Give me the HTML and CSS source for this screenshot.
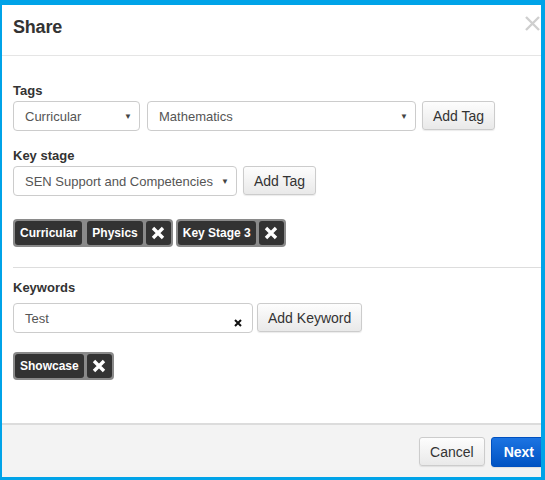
FILE: index.html
```html
<!DOCTYPE html>
<html lang="en">
  <head>
    <meta charset="UTF-8" />
    <meta name="viewport" content="width=device-width, initial-scale=1.0" />
    <title>Share</title>
    <link rel="stylesheet" href="styles.css">
  </head>

  <body>
    <div class="frame">
      <div class="modal">
        <div class="modal-header">
          <h1>Share</h1>
          <button class="close" title="Close">
            <svg width="15" height="15" viewBox="0 0 15 15">
              <path d="M1 1 L14 14 M14 1 L1 14" stroke="#cfcfcf" stroke-width="2.4" fill="none" />
            </svg>
          </button>
        </div>

        <div class="modal-body">
          <label class="field-label">Tags</label>
          <div class="row">
            <div class="select select-type">
              <span>Curricular</span>
              <span class="caret">&#9660;</span>
            </div>
            <div class="select select-subject">
              <span>Mathematics</span>
              <span class="caret">&#9660;</span>
            </div>
            <button class="btn">Add Tag</button>
          </div>

          <label class="field-label spaced">Key stage</label>
          <div class="row">
            <div class="select select-stage">
              <span>SEN Support and Competencies</span>
              <span class="caret">&#9660;</span>
            </div>
            <button class="btn">Add Tag</button>
          </div>

          <div class="chips">
            <div class="chip-group">
              <span class="chip first">Curricular</span>
              <span class="chip">Physics</span>
              <span class="chip remove">
                <svg width="14" height="14" viewBox="0 0 14 14">
                  <path d="M2 2 L12 12 M12 2 L2 12" stroke="#fff" stroke-width="3.4" fill="none" />
                </svg>
              </span>
            </div>
            <div class="chip-group">
              <span class="chip">Key Stage 3</span>
              <span class="chip remove">
                <svg width="14" height="14" viewBox="0 0 14 14">
                  <path d="M2 2 L12 12 M12 2 L2 12" stroke="#fff" stroke-width="3.4" fill="none" />
                </svg>
              </span>
            </div>
          </div>

          <hr class="divider" />

          <label class="field-label keywords">Keywords</label>
          <div class="row">
            <div class="input">
              <span>Test</span>
              <svg class="clear" width="8" height="8" viewBox="0 0 8 8">
                <path d="M1 1 L7 7 M7 1 L1 7" stroke="#111" stroke-width="2" fill="none" />
              </svg>
            </div>
            <button class="btn">Add Keyword</button>
          </div>

          <div class="chips chips-keywords">
            <div class="chip-group">
              <span class="chip">Showcase</span>
              <span class="chip remove">
                <svg width="14" height="14" viewBox="0 0 14 14">
                  <path d="M2 2 L12 12 M12 2 L2 12" stroke="#fff" stroke-width="3.4" fill="none" />
                </svg>
              </span>
            </div>
          </div>
        </div>

        <div class="modal-footer">
          <button class="btn">Cancel</button>
          <button class="btn btn-primary">Next</button>
        </div>
      </div>
    </div>
  </body>
</html>
```

FILE: styles.css
```css
body {
  margin: 0;
  font-family: "Liberation Sans", Arial, sans-serif;
  color: #333;
}
.frame {
  width: 545px;
  height: 480px;
  box-sizing: border-box;
  border-style: solid;
  border-color: #00a3e8;
  border-width: 5px 4px 3px 2px;
  overflow: hidden;
  background-color: white;
}
.modal {
  width: 552px;
  height: 100%;
  display: flex;
  flex-direction: column;
}
.modal-header {
  height: 51px;
  box-sizing: border-box;
  display: flex;
  justify-content: space-between;
  align-items: flex-start;
  padding: 11px 14px 0 11px;
  border-bottom: 1px solid #e5e5e5;
}
.modal-header h1 {
  margin: 0;
  font-size: 18px;
  line-height: 22px;
  font-weight: bold;
  color: #333;
  letter-spacing: -0.2px;
}
.close {
  border: none;
  background: none;
  padding: 0;
  width: 15px;
  height: 15px;
  cursor: pointer;
}
.close svg {
  display: block;
}
.modal-body {
  flex: 1;
  padding: 26px 13px 0 11px;
}
.field-label {
  display: block;
  font-size: 13px;
  line-height: 18px;
  font-weight: bold;
  color: #333;
  margin-bottom: 1px;
}
.field-label.spaced {
  margin-top: 16px;
}
.field-label.keywords {
  margin-top: 11px;
  margin-bottom: 6px;
}
.row {
  display: flex;
  gap: 6px;
}
.select,
.input {
  height: 30px;
  box-sizing: border-box;
  border: 1px solid #ccc;
  border-radius: 4px;
  background-color: white;
  display: flex;
  align-items: center;
  justify-content: space-between;
  padding: 0 7px 0 11px;
  font-size: 13px;
  color: #555;
  white-space: nowrap;
}
.select-type {
  width: 127px;
  margin-right: 1px;
}
.select-subject {
  width: 269px;
}
.select-stage {
  width: 224px;
}
.caret {
  font-size: 8px;
  color: #444;
}
.input {
  width: 240px;
  padding-right: 10px;
  margin-right: -2px;
}
.input .clear {
  margin-top: 9px;
}
.btn {
  height: 29px;
  padding: 0 10px;
  border: 1px solid #ccc;
  border-radius: 3px;
  background: linear-gradient(#fdfdfd, #e9e9e9);
  box-shadow: 0 1px 1px rgba(0, 0, 0, 0.08);
  font-family: inherit;
  font-size: 14px;
  color: #333;
  cursor: pointer;
}
.btn-primary {
  height: 30px;
  padding: 0 12px;
  border-color: #0050bf;
  background: linear-gradient(#1c74e2, #0053c3);
  color: white;
  font-weight: bold;
}
.chips {
  display: flex;
  gap: 3px;
  margin-top: 23px;
}
.chips-keywords {
  margin-top: 19px;
}
.chip-group {
  display: flex;
  gap: 3px;
  padding: 2px;
  border-radius: 4px;
  background-color: #8a8a8a;
}
.chip {
  height: 24px;
  line-height: 24px;
  padding: 0 5px;
  border-radius: 3px;
  background-color: #333;
  color: white;
  font-size: 12px;
  font-weight: bold;
}
.chip.first {
  margin-right: 2px;
}
.chip.remove {
  width: 25px;
  padding: 0;
  display: flex;
  align-items: center;
  justify-content: center;
}
.divider {
  border: none;
  border-top: 1px solid #ddd;
  margin: 20px 0 0 0;
}
.modal-footer {
  height: 54px;
  box-sizing: border-box;
  display: flex;
  justify-content: flex-end;
  align-items: flex-start;
  gap: 6px;
  padding: 12px 7px 0 0;
  border-top: 2px solid #dcdcdc;
  background-color: #f3f3f3;
}
```
